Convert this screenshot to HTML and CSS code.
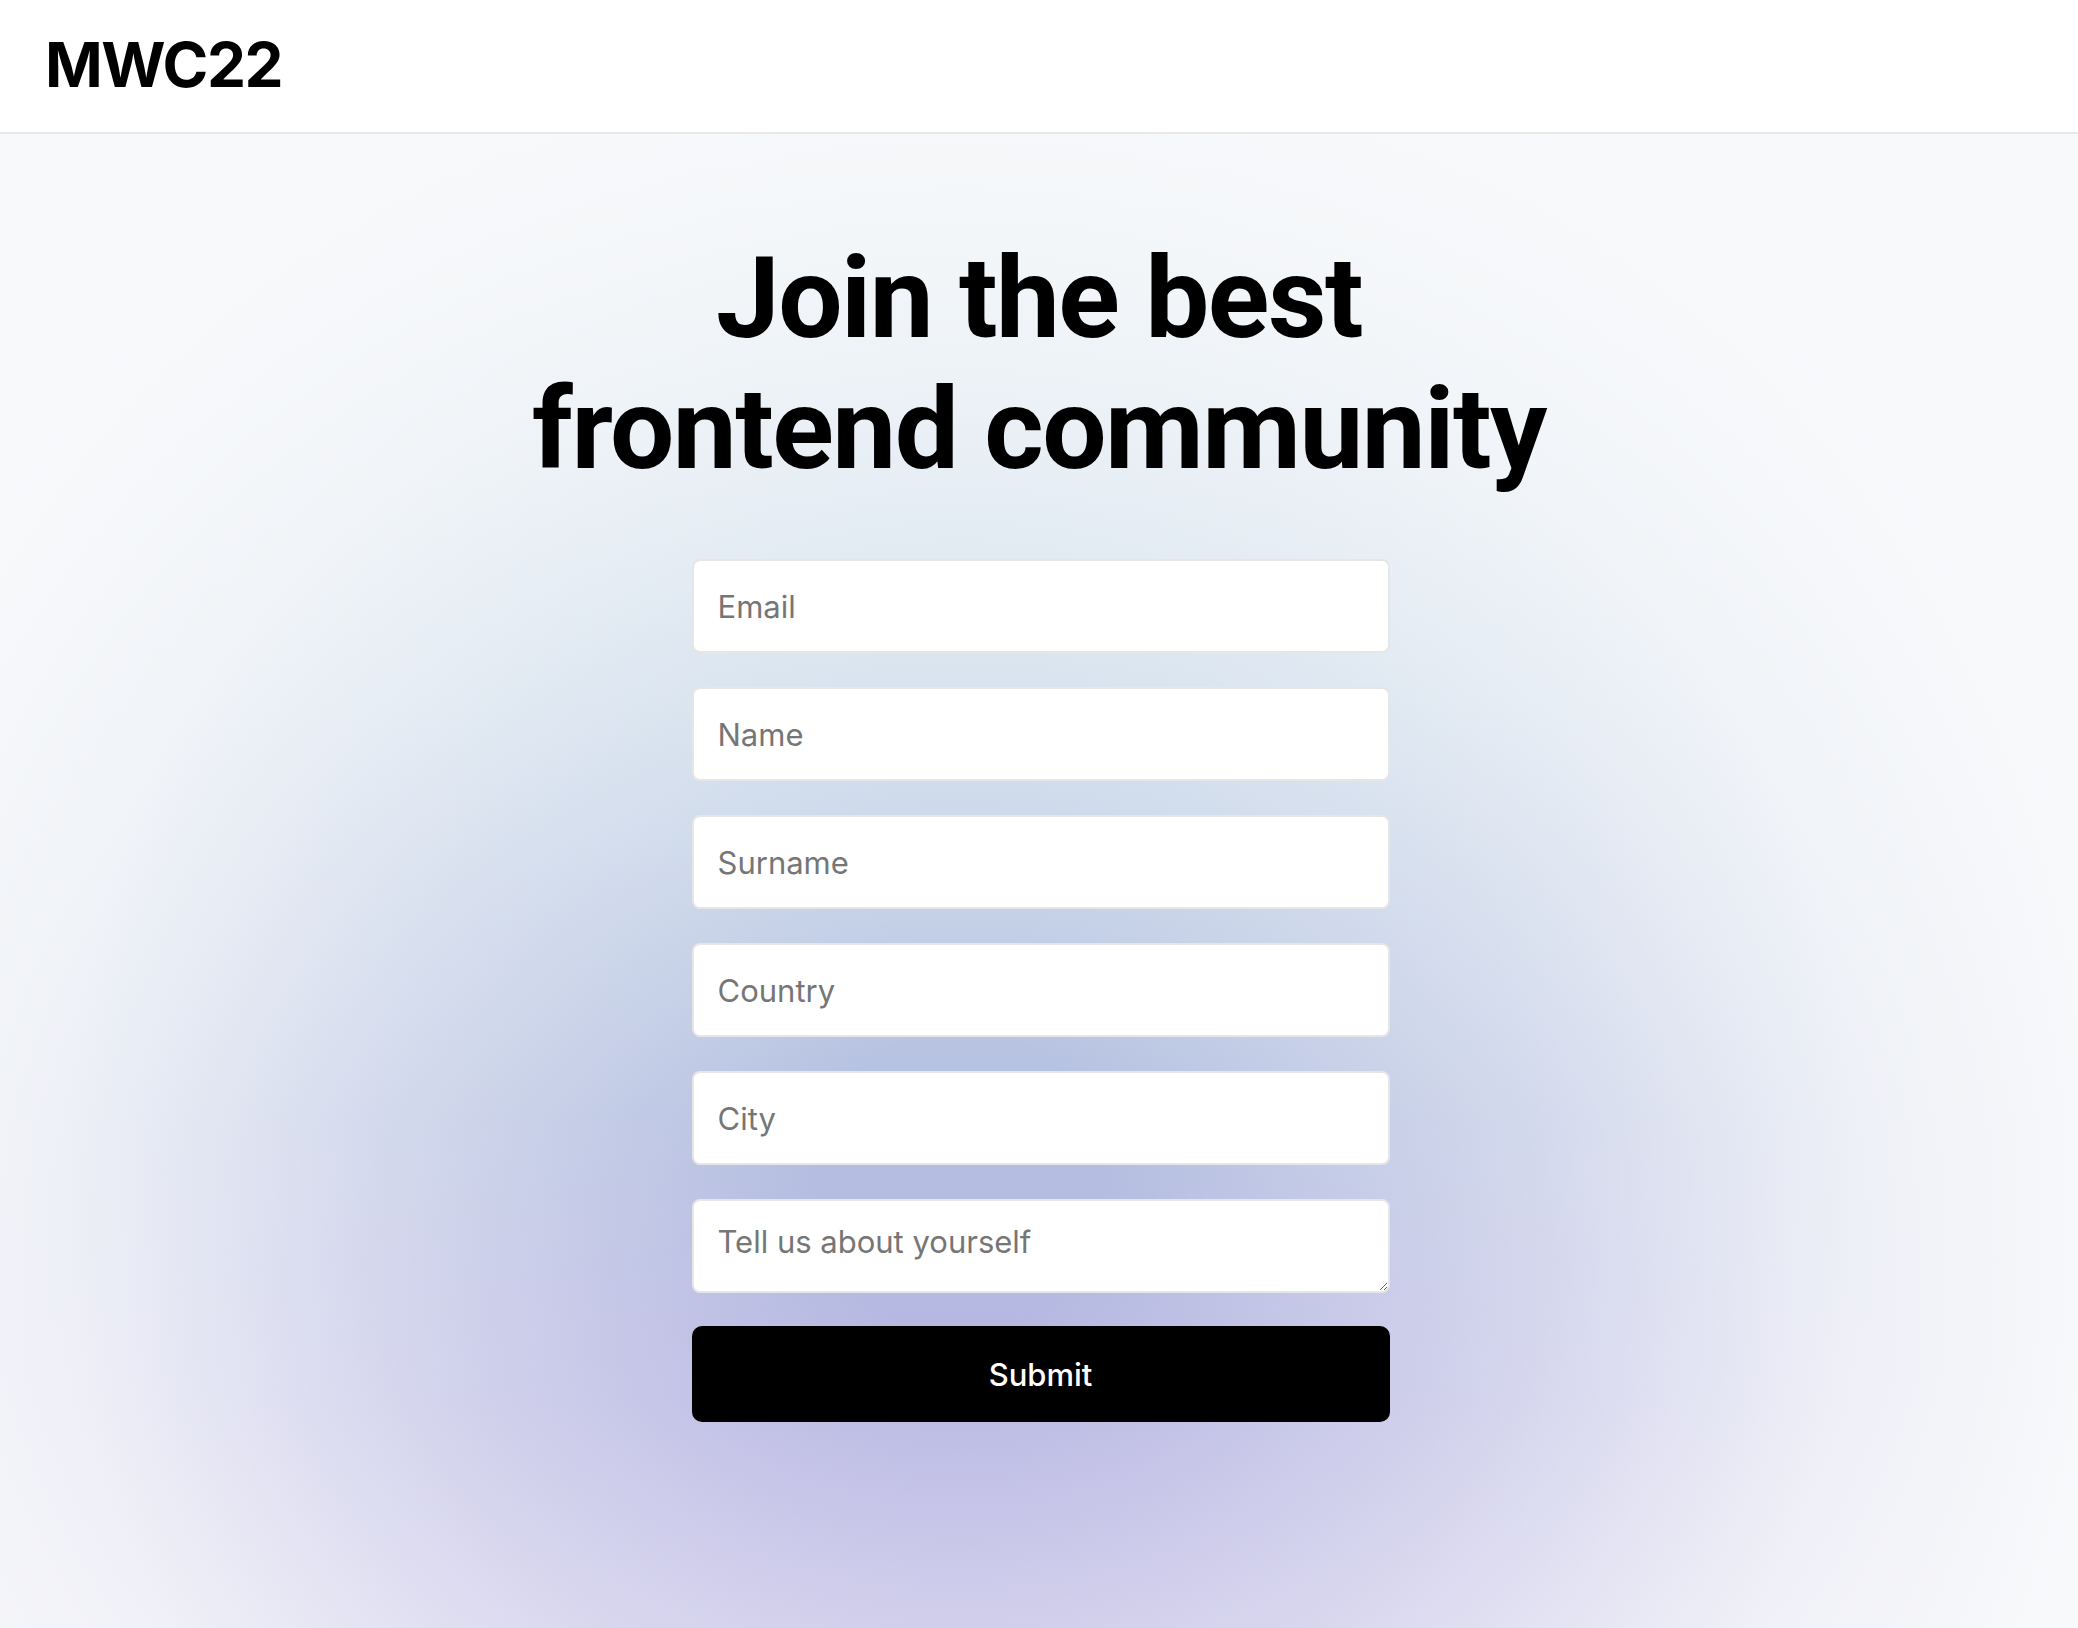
FILE: index.html
```html
<!DOCTYPE html>
<html lang="en">
<head>
<meta charset="utf-8">
<title>MWC22</title>
<link rel="stylesheet" href="styles.css">
</head>
<body>
<header class="topbar">
  <div class="logo">MWC22</div>
</header>
<main class="hero">
  <h1 class="title">Join the best<br>frontend community</h1>
  <form class="signup">
    <input class="field" type="email" placeholder="Email">
    <input class="field" type="text" placeholder="Name">
    <input class="field" type="text" placeholder="Surname">
    <input class="field" type="text" placeholder="Country">
    <input class="field" type="text" placeholder="City">
    <textarea class="field area" placeholder="Tell us about yourself"></textarea>
    <button class="submit" type="button">Submit</button>
  </form>
</main>
</body>
</html>
```
FILE: styles.css
```css
* { box-sizing: border-box; }
html, body { margin: 0; padding: 0; }
body {
  font-family: Inter, "Noto Sans", sans-serif;
  color: #000;
  background: #f8f9fb;
  min-height: 1628px;
  display: flex;
  flex-direction: column;
}
.topbar {
  height: 134px;
  background: #fff;
  border-bottom: 2px solid #e8e8e8;
  display: flex;
  align-items: center;
  padding: 0 45px;
}
.logo {
  font-size: 62px;
  font-weight: 700;
  letter-spacing: -1.5px;
  line-height: 1;
  margin-top: -2px;
}
.hero {
  flex: 1;
  display: flex;
  flex-direction: column;
  align-items: center;
  padding-top: 99px;
  background:
    radial-gradient(ellipse 1150px 1250px at 960px 1050px,
      rgba(248,249,251,0) 0%,
      rgba(248,249,251,0) 12%,
      rgba(248,249,251,0.45) 50%,
      rgba(248,249,251,0.85) 78%,
      rgba(248,249,251,1) 100%),
    linear-gradient(to bottom, #e2eef2 0%, #c8d8e9 38%, #b4bfe0 66%, #b7b6e2 85%, #c3bfe6 100%);
}
.title {
  margin: 0;
  font-family: Roboto, Inter, sans-serif;
  font-size: 114px;
  font-weight: 700;
  line-height: 131px;
  letter-spacing: -1.5px;
  text-align: center;
}
.signup {
  width: 698px;
  margin-top: 64px;
  margin-left: 3px;
  display: flex;
  flex-direction: column;
  gap: 34px;
}
.field {
  display: block;
  width: 100%;
  height: 94px;
  border: 2px solid #e6e6e6;
  border-radius: 8px;
  background: #fff;
  padding: 0 24px;
  font-family: Inter, "Noto Sans", sans-serif;
  font-size: 31px;
  color: #222;
  outline: none;
}
.field::placeholder { color: #767676; }
.area {
  padding-top: 22px;
  resize: vertical;
  line-height: 1.2;
}
.submit {
  height: 96px;
  margin-top: -1px;
  border: 0;
  border-radius: 10px;
  background: #000;
  color: #fff;
  font-family: Inter, "Noto Sans", sans-serif;
  font-size: 31px;
  font-weight: 500;
  cursor: pointer;
}
```
